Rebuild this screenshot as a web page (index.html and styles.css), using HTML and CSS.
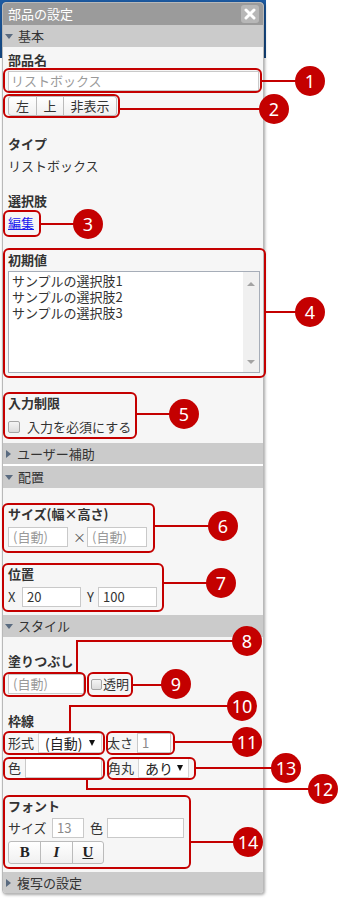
FILE: index.html
```html
<!DOCTYPE html>
<html lang="ja">
<head>
<meta charset="utf-8">
<title>部品の設定</title>
<link rel="stylesheet" href="styles.css">
</head>
<body>
<div class="backdrop"></div>
<div class="panel">
  <div class="titlebar">
    <span class="title">部品の設定</span>
    <span class="close"><svg width="12" height="12" viewBox="0 0 12 12"><path d="M2 2L10 10M10 2L2 10" stroke="#fff" stroke-width="3" stroke-linecap="round"/></svg></span>
  </div>

  <div class="head open"><span class="tri-down"></span>基本</div>
  <div class="body basic">
    <div class="lbl l-name">部品名</div>
    <div class="inp wide ph">リストボックス</div>
    <div class="btngroup"><span class="b w27">左</span><span class="b w27">上</span><span class="b w53">非表示</span></div>
    <div class="lbl l-type">タイプ</div>
    <div class="val">リストボックス</div>
    <div class="lbl l-choice">選択肢</div>
    <div class="val link-row"><a class="link" href="#">編集</a></div>
    <div class="lbl l-init">初期値</div>
    <div class="listbox">
      <div class="items">
        <div>サンプルの選択肢1</div>
        <div>サンプルの選択肢2</div>
        <div>サンプルの選択肢3</div>
      </div>
      <div class="sbar"><span class="arr-up"></span><span class="arr-down"></span></div>
    </div>
    <div class="lbl l-limit">入力制限</div>
    <div class="row chkrow"><span class="chk"></span><span class="chktext">入力を必須にする</span></div>
  </div>

  <div class="head closed"><span class="tri-right"></span>ユーザー補助</div>
  <div class="head open"><span class="tri-down"></span>配置</div>
  <div class="body layout">
    <div class="lbl l-size">サイズ(幅×高さ)</div>
    <div class="row">
      <div class="inp w60 ph">(自動)</div>
      <span class="times">×</span>
      <div class="inp w60 ph">(自動)</div>
    </div>
    <div class="lbl l-pos">位置</div>
    <div class="row">
      <span class="xl">X</span>
      <div class="inp w59">20</div>
      <span class="yl">Y</span>
      <div class="inp w59">100</div>
    </div>
  </div>

  <div class="head open"><span class="tri-down"></span>スタイル</div>
  <div class="body style">
    <div class="lbl l-fill">塗りつぶし</div>
    <div class="row">
      <div class="inp w76 ph">(自動)</div>
      <span class="chk small"></span><span class="chktext2">透明</span>
    </div>
    <div class="lbl l-border">枠線</div>
    <div class="row r-b1">
      <span class="t w26">形式</span>
      <div class="sel s1"><span>(自動)</span><span class="dd"></span></div>
      <span class="t w26 ml5">太さ</span>
      <div class="inp w34 ml4 gray">1</div>
    </div>
    <div class="row r-b2">
      <span class="t w13">色</span>
      <div class="inp w77 ml4"></div>
      <span class="t w26 ml6">角丸</span>
      <div class="sel s2"><span>あり</span><span class="dd"></span></div>
    </div>
    <div class="lbl l-font">フォント</div>
    <div class="row r-f1">
      <span class="t w39">サイズ</span>
      <div class="inp w32 ml5 gray">13</div>
      <span class="t w13 ml6">色</span>
      <div class="inp w77 ml4"></div>
    </div>
    <div class="btngroup biu"><span class="b w32 fb">B</span><span class="b w32 fi">I</span><span class="b w32 fu">U</span></div>
  </div>

  <div class="head closed last"><span class="tri-right"></span>複写の設定</div>
</div>

<div class="annot">
  <div class="box bx1"></div>
  <div class="box bx2"></div>
  <div class="box bx3"></div>
  <div class="box bx4"></div>
  <div class="box bx5"></div>
  <div class="box bx6"></div>
  <div class="box bx7"></div>
  <div class="box bx8"></div>
  <div class="box bx9"></div>
  <div class="box bx10"></div>
  <div class="box bx11"></div>
  <div class="box bx12"></div>
  <div class="box bx13"></div>
  <div class="box bx14"></div>

  <div class="ln h l1"></div>
  <div class="ln h l2"></div>
  <div class="ln h l3"></div>
  <div class="ln h l4"></div>
  <div class="ln h l5"></div>
  <div class="ln h l6"></div>
  <div class="ln h l7"></div>
  <div class="ln v l8v"></div>
  <div class="ln h l8h"></div>
  <div class="ln h l9"></div>
  <div class="ln v l10v"></div>
  <div class="ln h l10h"></div>
  <div class="ln h l11"></div>
  <div class="ln v l12v"></div>
  <div class="ln h l12h"></div>
  <div class="ln h l13"></div>
  <div class="ln h l14"></div>

  <div class="num c1">1</div>
  <div class="num c2">2</div>
  <div class="num c3">3</div>
  <div class="num c4">4</div>
  <div class="num c5">5</div>
  <div class="num c6">6</div>
  <div class="num c7">7</div>
  <div class="num c8">8</div>
  <div class="num c9">9</div>
  <div class="num c10">10</div>
  <div class="num c11">11</div>
  <div class="num c12">12</div>
  <div class="num c13">13</div>
  <div class="num c14">14</div>
</div>
</body>
</html>
```

FILE: styles.css
```css
html, body {
  margin: 0;
  padding: 0;
  background: #ffffff;
}
body {
  position: relative;
  width: 341px;
  height: 902px;
  font-family: "Noto Sans CJK JP", "Noto Sans", sans-serif;
  font-size: 13px;
  color: #333333;
}

.backdrop {
  position: absolute;
  left: 0;
  top: 0;
  width: 266px;
  height: 58px;
  background: linear-gradient(#1d5ba2, #14467f);
}

.panel {
  position: relative;
  z-index: 1;
  margin: 2px 0 0 2px;
  width: 262px;
  box-sizing: border-box;
  border: 1px solid #b9b9b9;
  border-radius: 4px;
  background: #f6f6f6;
  box-shadow: 1px 1px 3px rgba(0, 0, 0, 0.35);
  overflow: hidden;
}

.titlebar {
  height: 22px;
  background: #9b9b9b;
  color: #ffffff;
  display: flex;
  align-items: center;
  justify-content: space-between;
  padding: 0 4px 0 5px;
  line-height: 22px;
}
.title {
  font-size: 13px;
}
.close {
  width: 18px;
  height: 18px;
  border-radius: 3px;
  background: #b7b7b7;
  display: flex;
  align-items: center;
  justify-content: center;
}

.head {
  height: 22px;
  line-height: 22px;
  background: #cbcbcb;
  display: flex;
  align-items: center;
  color: #333333;
}
.head.closed {
  height: 21px;
  border-bottom: 2px solid #ffffff;
}
.head.last {
  border-bottom: 0;
}
.tri-down {
  width: 0;
  height: 0;
  margin: 0 5px 0 2px;
  border-left: 4px solid transparent;
  border-right: 4px solid transparent;
  border-top: 5px solid #5a6b80;
}
.tri-right {
  width: 0;
  height: 0;
  margin: 0 6px 0 3px;
  border-top: 4px solid transparent;
  border-bottom: 4px solid transparent;
  border-left: 5px solid #5a6b80;
}

.body {
  padding: 0 4px 0 5px;
}
.basic { padding-top: 3px; padding-bottom: 6px; }
.layout { padding-top: 16px; padding-bottom: 8px; }
.style { padding-top: 14px; padding-bottom: 8px; }

.lbl {
  font-weight: bold;
  line-height: 20px;
  height: 20px;
}
.val {
  line-height: 20px;
  height: 20px;
  margin-top: 2px;
}
.l-type { margin-top: 18px; }
.l-choice { margin-top: 15px; }
.l-init { margin-top: 17px; }
.l-limit { margin-top: 20px; }
.l-pos { margin-top: 17px; }
.l-border { margin-top: 17px; }
.l-font { margin-top: 18px; }

.link {
  color: #1a1aee;
  text-decoration: underline;
}

.inp {
  height: 20px;
  box-sizing: border-box;
  border: 1px solid #c9c9c9;
  background: #ffffff;
  line-height: 18px;
  padding: 0 4px;
  color: #333333;
  white-space: nowrap;
  overflow: hidden;
}
.inp.ph { color: #9a9a9a; }
.inp.gray { color: #8a8a8a; }
.inp.wide {
  width: 251px;
  margin-top: 1px;
  padding: 0 2px;
}
.w60 { width: 60px; }
.w59 { width: 59px; }
.w76 { width: 76px; }
.w77 { width: 77px; }
.w34 { width: 34px; }
.w32 { width: 32px; }

.btngroup {
  display: flex;
  margin-top: 5px;
  height: 20px;
  width: max-content;
  border: 1px solid #bbbbbb;
  border-radius: 3px;
  box-sizing: border-box;
  overflow: hidden;
  background: linear-gradient(#ffffff, #f0f0f0);
}
.btngroup .b {
  height: 18px;
  line-height: 18px;
  text-align: center;
  border-left: 1px solid #bbbbbb;
  box-sizing: border-box;
}
.btngroup .b:first-child { border-left: 0; }
.b.w27 { width: 27px; }
.b.w53 { width: 53px; }
.b.w32 { width: 32px; }
.btngroup.biu {
  margin-top: 3px;
  height: 23px;
  width: 96px;
}
.biu .b {
  height: 21px;
  line-height: 21px;
  font-family: "Liberation Serif", serif;
  font-size: 15px;
  font-weight: bold;
  color: #222222;
}
.biu .fi { font-style: italic; }
.biu .fu { text-decoration: underline; }

.listbox {
  margin-top: 1px;
  width: 252px;
  height: 102px;
  box-sizing: border-box;
  border: 1px solid #a6adb8;
  background: #ffffff;
  display: flex;
}
.items {
  flex: 1;
  padding: 1px 0 0 3px;
  line-height: 16px;
  color: #333333;
}
.sbar {
  width: 16px;
  background: #f0f0f0;
  display: flex;
  flex-direction: column;
  justify-content: space-between;
  align-items: center;
  padding: 10px 0 8px;
  box-sizing: border-box;
}
.arr-up {
  width: 0;
  height: 0;
  border-left: 4px solid transparent;
  border-right: 4px solid transparent;
  border-bottom: 4px solid #a3a3a3;
}
.arr-down {
  width: 0;
  height: 0;
  border-left: 4px solid transparent;
  border-right: 4px solid transparent;
  border-top: 4px solid #a3a3a3;
}

.row {
  display: flex;
  align-items: center;
  height: 20px;
  margin-top: 3px;
  line-height: 20px;
}
.chkrow { margin-top: 4px; }
.chk {
  width: 12px;
  height: 12px;
  box-sizing: border-box;
  border: 1px solid #a5a5a5;
  border-radius: 2px;
  background: linear-gradient(#f4f4f4, #dcdcdc);
  margin-right: 7px;
}
.chk.small {
  width: 11px;
  height: 11px;
  margin: 0 1px 0 7px;
}
.times {
  width: 9px;
  margin: 0 5px;
  text-align: center;
  color: #555555;
}
.xl { width: 14px; }
.yl { width: 11px; margin-left: 6px; }

.r-b1 { margin-top: 2px; }
.r-b2 { margin-top: 5px; }
.r-f1 { margin-top: 2px; }

.t { white-space: nowrap; }
.w26 { width: 26px; }
.w13 { width: 13px; }
.w39 { width: 39px; }
.ml4 { margin-left: 4px; }
.ml5 { margin-left: 5px; }
.ml6 { margin-left: 6px; }

.sel {
  height: 20px;
  box-sizing: border-box;
  border: 1px solid #d4d4d4;
  background: #ffffff;
  display: flex;
  align-items: center;
  justify-content: space-between;
  font-size: 14px;
  color: #222222;
  margin-left: 4px;
}
.s1 { width: 64px; padding: 0 6px 0 6px; }
.s2 { width: 51px; padding: 0 5px 0 6px; }
.dd {
  width: 0;
  height: 0;
  border-left: 3.5px solid transparent;
  border-right: 3.5px solid transparent;
  border-top: 6px solid #111111;
}

/* annotation overlay */
.annot {
  position: absolute;
  left: 0;
  top: 0;
  z-index: 5;
}
.box {
  position: absolute;
  box-sizing: border-box;
  border: 2px solid #c40000;
  border-radius: 6px;
}
.bx1 { left: 3px; top: 68px; width: 259px; height: 25px; }
.bx2 { left: 3px; top: 94px; width: 117px; height: 24px; }
.bx3 { left: 3px; top: 210px; width: 38px; height: 27px; }
.bx4 { left: 3px; top: 248px; width: 263px; height: 130px; }
.bx5 { left: 3px; top: 392px; width: 134px; height: 47px; }
.bx6 { left: 2px; top: 503px; width: 153px; height: 50px; }
.bx7 { left: 2px; top: 563px; width: 162px; height: 49px; }
.bx8 { left: 3px; top: 672px; width: 83px; height: 25px; }
.bx9 { left: 87px; top: 672px; width: 46px; height: 25px; }
.bx10 { left: 3px; top: 731px; width: 102px; height: 24px; }
.bx11 { left: 106px; top: 731px; width: 69px; height: 24px; }
.bx12 { left: 3px; top: 757px; width: 102px; height: 23px; }
.bx13 { left: 107px; top: 757px; width: 89px; height: 23px; }
.bx14 { left: 3px; top: 795px; width: 188px; height: 74px; }

.ln {
  position: absolute;
  background: #c40000;
}
.ln.h { height: 2px; }
.ln.v { width: 2px; }
.l1 { left: 262px; top: 80px; width: 48px; }
.l2 { left: 120px; top: 108px; width: 154px; }
.l3 { left: 41px; top: 223px; width: 47px; }
.l4 { left: 266px; top: 311px; width: 44px; }
.l5 { left: 137px; top: 413px; width: 47px; }
.l6 { left: 155px; top: 525px; width: 68px; }
.l7 { left: 164px; top: 582px; width: 57px; }
.l8v { left: 76px; top: 641px; height: 31px; }
.l8h { left: 76px; top: 640px; width: 171px; }
.l9 { left: 133px; top: 684px; width: 43px; }
.l10v { left: 69px; top: 706px; height: 25px; }
.l10h { left: 69px; top: 705px; width: 173px; }
.l11 { left: 175px; top: 741px; width: 72px; }
.l12v { left: 86px; top: 780px; height: 9px; }
.l12h { left: 86px; top: 788px; width: 237px; }
.l13 { left: 196px; top: 767px; width: 90px; }
.l14 { left: 191px; top: 841px; width: 57px; }

.num {
  position: absolute;
  width: 30px;
  height: 30px;
  border-radius: 50%;
  background: #c40000;
  color: #ffffff;
  font-family: "Noto Sans", "Open Sans", sans-serif;
  font-size: 18px;
  line-height: 30px;
  text-align: center;
}
.c1 { left: 295px; top: 66px; }
.c2 { left: 259px; top: 94px; }
.c3 { left: 73px; top: 209px; }
.c4 { left: 295px; top: 297px; }
.c5 { left: 169px; top: 399px; }
.c6 { left: 208px; top: 511px; }
.c7 { left: 206px; top: 568px; }
.c8 { left: 232px; top: 626px; }
.c9 { left: 161px; top: 669px; }
.c10 { left: 227px; top: 691px; }
.c11 { left: 232px; top: 727px; }
.c12 { left: 308px; top: 774px; }
.c13 { left: 271px; top: 753px; }
.c14 { left: 233px; top: 827px; }
```
